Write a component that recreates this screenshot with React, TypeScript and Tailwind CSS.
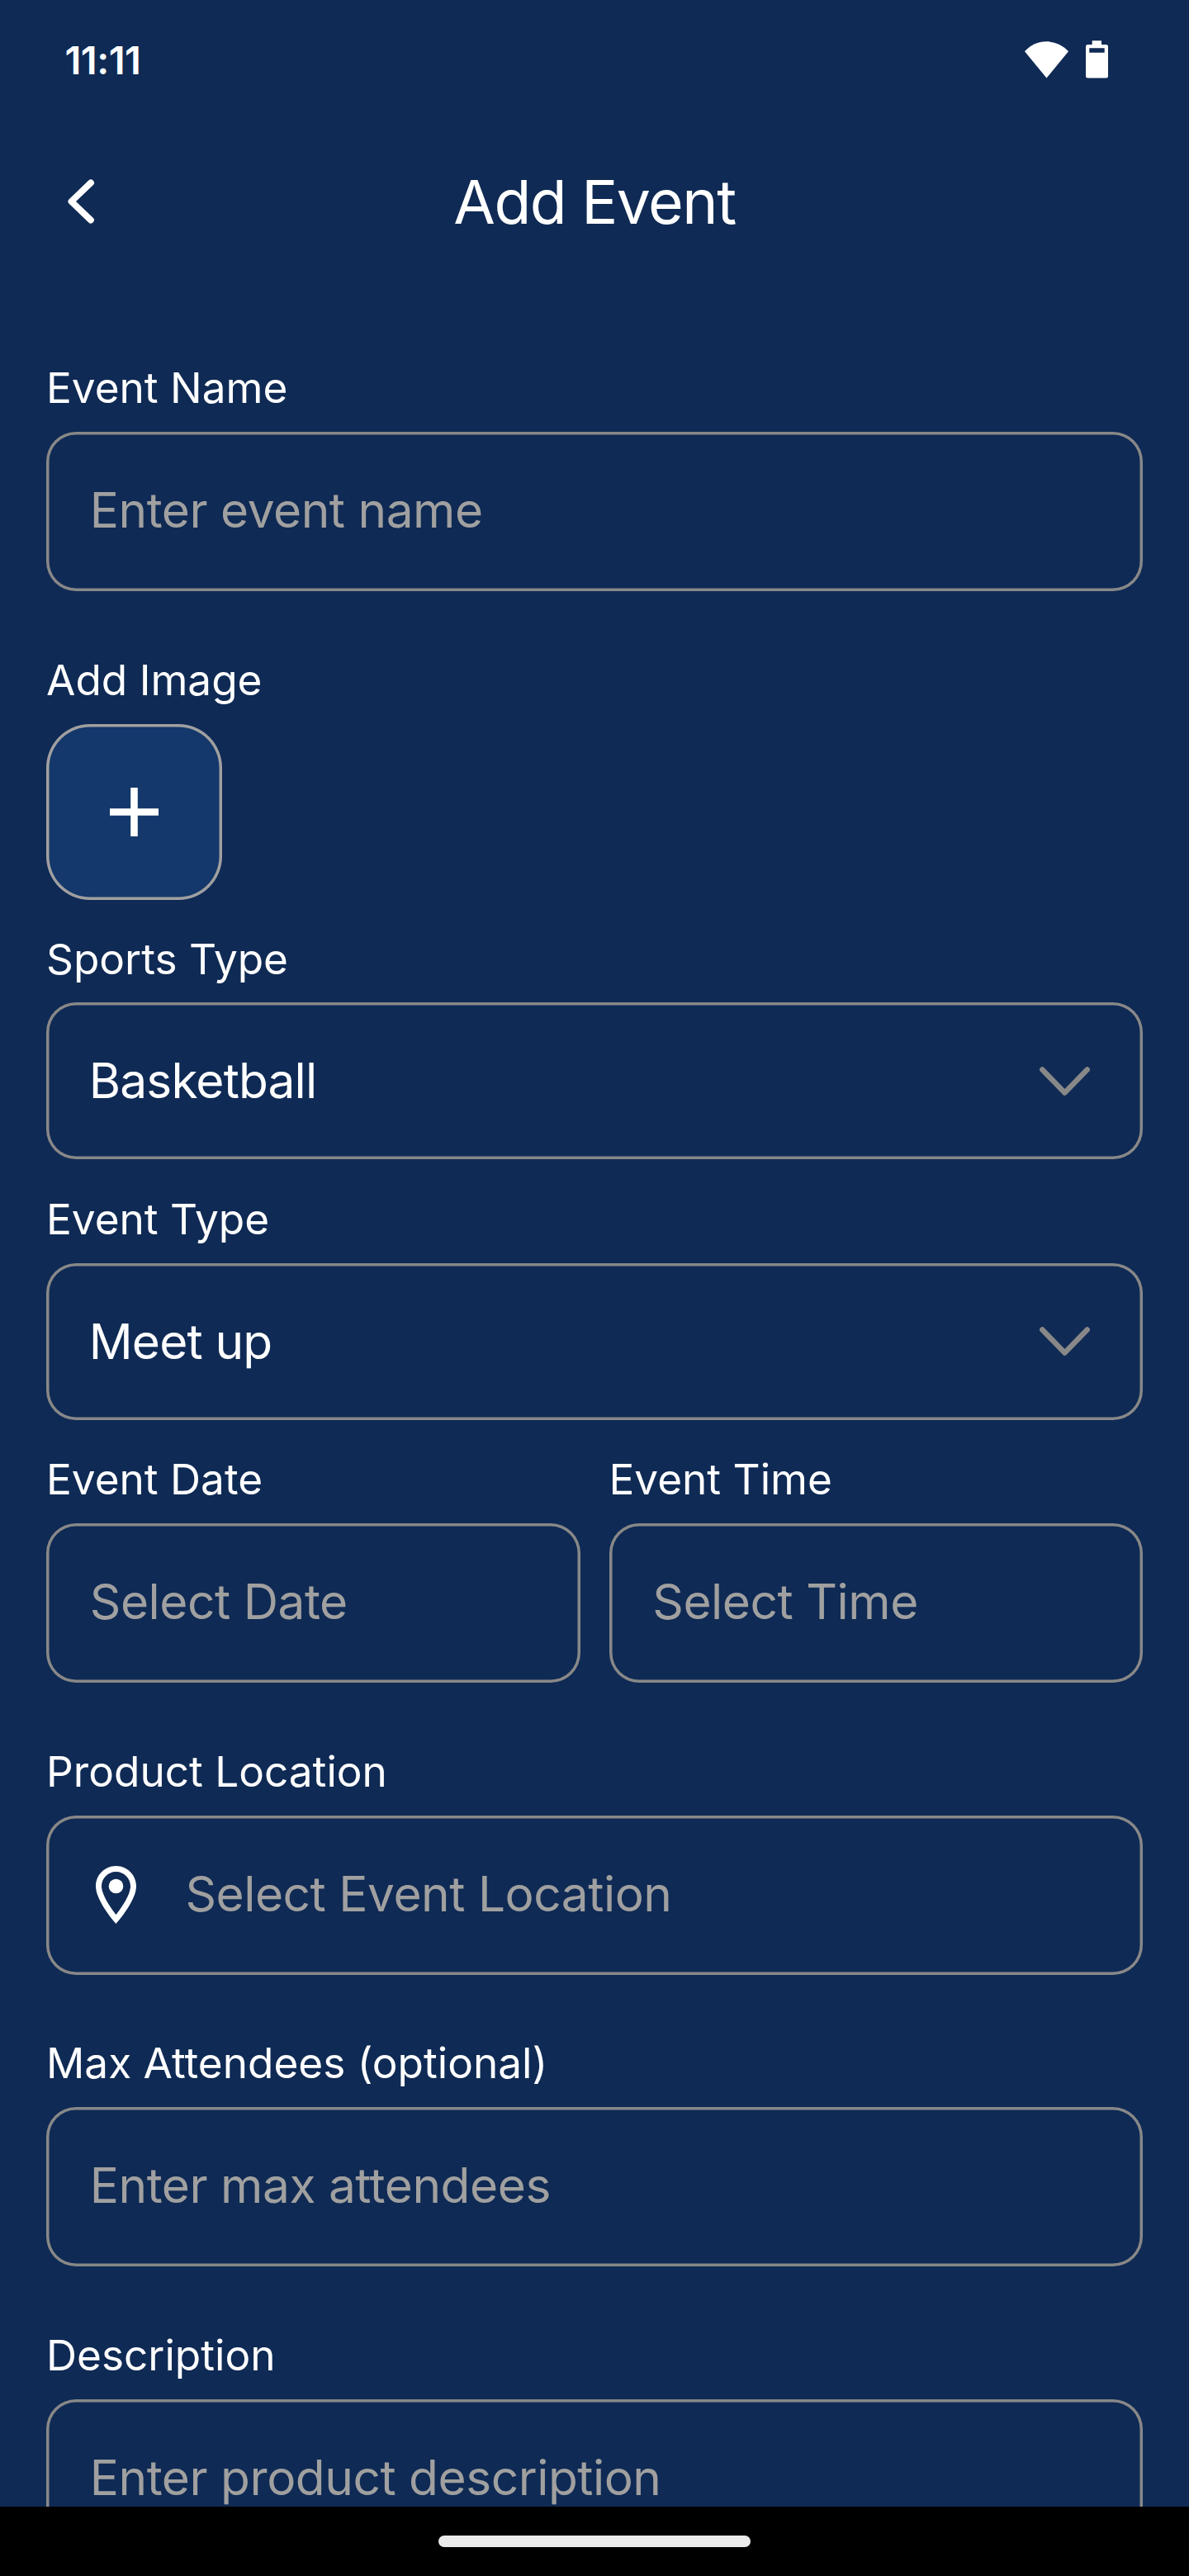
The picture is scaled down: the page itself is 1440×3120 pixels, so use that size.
import type { ReactNode } from "react";

function StatusBar() {
  return (
    <div className="flex h-36 shrink-0 items-center justify-between pl-[78.5px] pr-[98px]">
      <span className="text-[47px] leading-none font-semibold tracking-[-0.5px]">11:11</span>
      <div className="flex items-center gap-[21px]">
        <svg className="h-[46px] w-[53px]" viewBox="0 0 53 46" fill="currentColor">
          <path d="M0 13.2C7.2 5.6 16.2 1.3 26.5 1.3S45.8 5.6 53 13.2L26.5 45.5Z" />
        </svg>
        <svg className="h-[46px] w-[27px]" viewBox="0 0 27 46" fill="currentColor">
          <path
            fillRule="evenodd"
            d="M7.7 0.2H19V5H24.5A2.5 2.5 0 0 1 27 7.5V43A2.5 2.5 0 0 1 24.5 45.5H2.5A2.5 2.5 0 0 1 0 43V7.500A2.5 2.5 0 0 1 2.5 5H7.7ZM4.3 9.2V14.8H22.7V9.2Z"
          />
        </svg>
      </div>
    </div>
  );
}

function Header() {
  return (
    <header className="grid h-[201px] shrink-0 grid-cols-[1fr_auto_1fr] items-center px-20">
      <button type="button" aria-label="Back" className="w-9">
        <svg
          className="mb-0.5 h-[54px] w-9"
          viewBox="0 0 36 54"
          fill="none"
          stroke="currentColor"
          strokeWidth="7.8"
          strokeLinecap="round"
          strokeLinejoin="round"
        >
          <path d="M30 4.4L6.4 27L30 49.6" />
        </svg>
      </button>
      <h1 className="text-[73.3px] leading-[90px] tracking-[-1.5px]">Add Event</h1>
    </header>
  );
}

function Field({ label, children }: { label: string; children: ReactNode }) {
  return (
    <div className="flex flex-1 flex-col gap-[21.8px]">
      <span className="h-[63px] text-[51.3px] leading-[63px]">{label}</span>
      {children}
    </div>
  );
}

function TextBox({ placeholder, icon }: { placeholder: string; icon?: ReactNode }) {
  return (
    <div className="flex h-[193px] items-center gap-[59.6px] rounded-[36px] pl-[52.8px] shadow-[inset_0_0_0_3.5px_#888888]">
      {icon}
      <span className="pb-[3px] text-[58.6px] leading-[72px] tracking-[-0.47px] whitespace-nowrap text-[#a0a0a0]">
        {placeholder}
      </span>
    </div>
  );
}

function SelectBox({ value }: { value: string }) {
  return (
    <div className="flex h-[190px] items-center justify-between rounded-[36px] pr-16 pl-[51.8px] shadow-[inset_0_0_0_3.5px_#888888]">
      <span className="text-[58.6px] leading-[72px] tracking-[-0.86px]">{value}</span>
      <svg
        className="h-[35px] w-[61px] text-[#888888]"
        viewBox="0 0 61 35"
        fill="none"
        stroke="currentColor"
        strokeWidth="6.5"
        strokeLinecap="round"
        strokeLinejoin="round"
      >
        <path d="M3.3 3.5L30.5 31.5L57.7 3.5" />
      </svg>
    </div>
  );
}

function PinIcon() {
  return (
    <svg className="mb-[1px] ml-[7px] h-[70px] w-[49px] shrink-0" viewBox="5 2 14 20" fill="currentColor">
      <path d="M12 2C8.13 2 5 5.13 5 9c0 5.25 7 13 7 13s7-7.75 7-13c0-3.87-3.13-7-7-7zM7 9c0-2.76 2.24-5 5-5s5 2.24 5 5c0 2.88-2.88 7.19-5 9.88C9.92 16.21 7 11.85 7 9z" />
      <circle cx="12" cy="9" r="2.5" />
    </svg>
  );
}

export default function App() {
  return (
    <div className="flex h-[3120px] w-[1440px] flex-col overflow-hidden bg-[#0f2a54] font-['Inter',sans-serif] text-white">
      <StatusBar />
      <Header />
      <main className="flex min-h-0 flex-1 flex-col overflow-hidden px-14 pt-[93px]">
        <div className="flex">
          <Field label="Event Name">
            <TextBox placeholder="Enter event name" />
          </Field>
        </div>
        <div className="mt-[76px] flex">
          <Field label="Add Image">
            <button
              type="button"
              aria-label="Add image"
              className="flex h-[213px] w-[213px] items-center justify-center rounded-[53px] bg-[#14386b] shadow-[inset_0_0_0_3.5px_#a0a0a0]"
            >
              <svg className="size-[59px]" viewBox="0 0 59 59" fill="currentColor">
                <path d="M25.2 0H33.8V25.2H59V33.8H33.8V59H25.2V33.8H0V25.2H25.2Z" />
              </svg>
            </button>
          </Field>
        </div>
        <div className="mt-10 flex">
          <Field label="Sports Type">
            <SelectBox value="Basketball" />
          </Field>
        </div>
        <div className="mt-[40.4px] flex">
          <Field label="Event Type">
            <SelectBox value="Meet up" />
          </Field>
        </div>
        <div className="mt-[40.4px] flex gap-[35px]">
          <Field label="Event Date">
            <TextBox placeholder="Select Date" />
          </Field>
          <Field label="Event Time">
            <TextBox placeholder="Select Time" />
          </Field>
        </div>
        <div className="mt-[76px] flex">
          <Field label="Product Location">
            <TextBox placeholder="Select Event Location" icon={<PinIcon />} />
          </Field>
        </div>
        <div className="mt-[75.7px] flex">
          <Field label="Max Attendees (optional)">
            <TextBox placeholder="Enter max attendees" />
          </Field>
        </div>
        <div className="mt-[75.7px] flex">
          <Field label="Description">
            <TextBox placeholder="Enter product description" />
          </Field>
        </div>
      </main>
      <div className="flex h-[84px] shrink-0 items-center justify-center bg-black">
        <div className="h-3.5 w-[378px] rounded-full bg-[#ebebeb]" />
      </div>
    </div>
  );
}
